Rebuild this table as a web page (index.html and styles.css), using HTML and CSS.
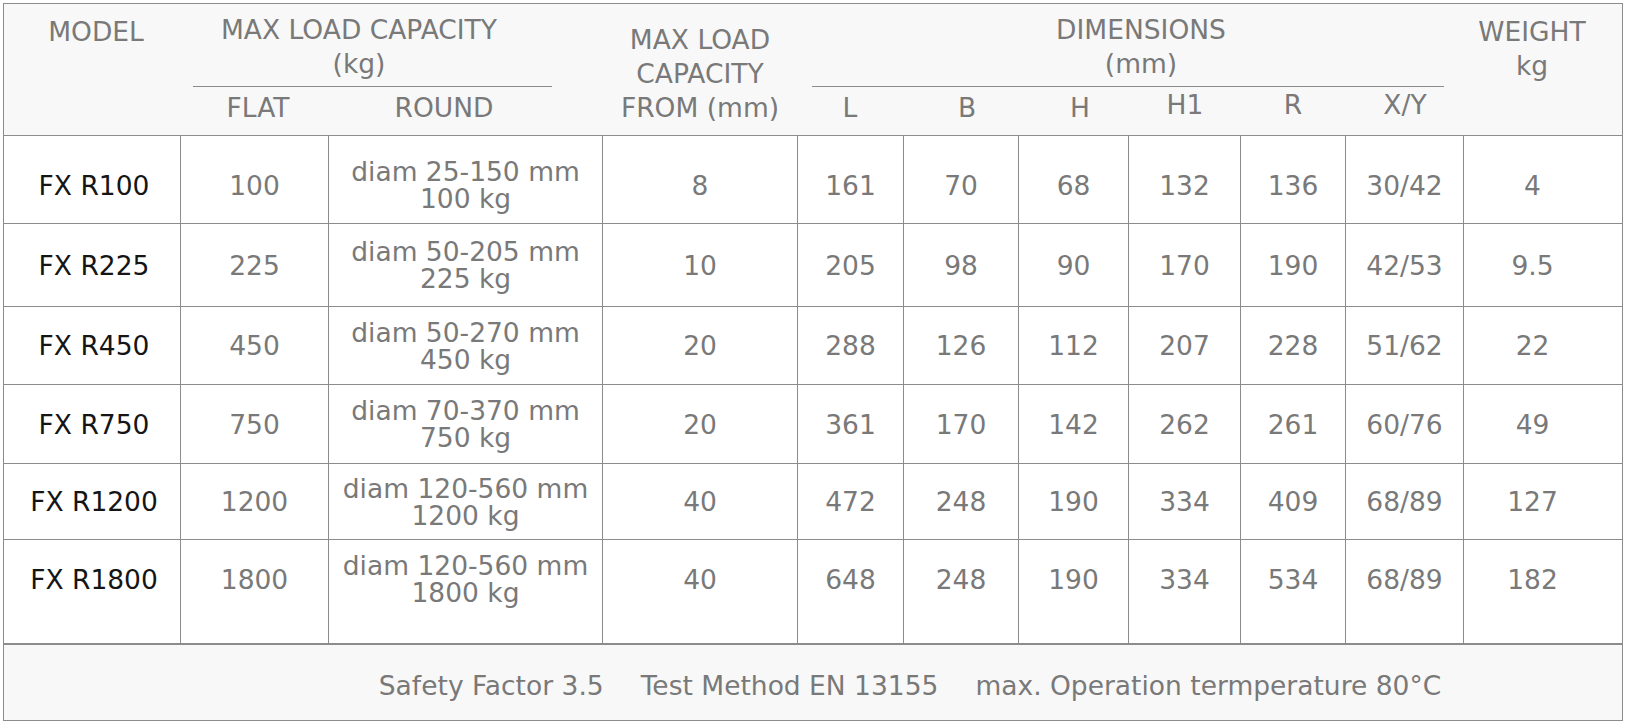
FILE: index.html
```html
<!DOCTYPE html>
<html lang="en">
<head>
<meta charset="utf-8">
<title>FX R specifications</title>
<link rel="stylesheet" href="styles.css">
</head>
<body>
<div class="spec">
  <div class="head">
    <div class="h-model">MODEL</div>
    <div class="h-group h-cap">
      <div class="h-title">MAX LOAD CAPACITY<br>(kg)</div>
      <div class="h-subs">
        <span class="s-flat">FLAT</span>
        <span class="s-round">ROUND</span>
      </div>
    </div>
    <div class="h-from">MAX LOAD<br>CAPACITY<br>FROM (mm)</div>
    <div class="h-group h-dim">
      <div class="h-title">DIMENSIONS<br>(mm)</div>
      <div class="h-subs">
        <span class="s-l">L</span>
        <span class="s-b">B</span>
        <span class="s-h">H</span>
        <span class="s-h1 up">H1</span>
        <span class="s-r up">R</span>
        <span class="s-xy up">X/Y</span>
      </div>
    </div>
    <div class="h-weight">WEIGHT<br>kg</div>
  </div>

  <div class="rows">
    <div class="row">
      <div class="c model">FX R100</div><div class="c">100</div><div class="c">diam 25-150 mm<br>100 kg</div><div class="c">8</div>
      <div class="c">161</div><div class="c">70</div><div class="c">68</div><div class="c">132</div><div class="c">136</div><div class="c">30/42</div><div class="c weight">4</div>
    </div>
    <div class="row">
      <div class="c model">FX R225</div><div class="c">225</div><div class="c">diam 50-205 mm<br>225 kg</div><div class="c">10</div>
      <div class="c">205</div><div class="c">98</div><div class="c">90</div><div class="c">170</div><div class="c">190</div><div class="c">42/53</div><div class="c weight">9.5</div>
    </div>
    <div class="row">
      <div class="c model">FX R450</div><div class="c">450</div><div class="c">diam 50-270 mm<br>450 kg</div><div class="c">20</div>
      <div class="c">288</div><div class="c">126</div><div class="c">112</div><div class="c">207</div><div class="c">228</div><div class="c">51/62</div><div class="c weight">22</div>
    </div>
    <div class="row">
      <div class="c model">FX R750</div><div class="c">750</div><div class="c">diam 70-370 mm<br>750 kg</div><div class="c">20</div>
      <div class="c">361</div><div class="c">170</div><div class="c">142</div><div class="c">262</div><div class="c">261</div><div class="c">60/76</div><div class="c weight">49</div>
    </div>
    <div class="row">
      <div class="c model">FX R1200</div><div class="c">1200</div><div class="c">diam 120-560 mm<br>1200 kg</div><div class="c">40</div>
      <div class="c">472</div><div class="c">248</div><div class="c">190</div><div class="c">334</div><div class="c">409</div><div class="c">68/89</div><div class="c weight">127</div>
    </div>
    <div class="row">
      <div class="c model">FX R1800</div><div class="c">1800</div><div class="c">diam 120-560 mm<br>1800 kg</div><div class="c">40</div>
      <div class="c">648</div><div class="c">248</div><div class="c">190</div><div class="c">334</div><div class="c">534</div><div class="c">68/89</div><div class="c weight">182</div>
    </div>
  </div>

  <div class="foot">
    <span>Safety Factor 3.5</span>
    <span>Test Method EN 13155</span>
    <span>max. Operation termperature 80°C</span>
  </div>
</div>
</body>
</html>
```

FILE: styles.css
```css
html, body {
  margin: 0;
  padding: 0;
  background: #ffffff;
}

body {
  padding: 3px 0 0 3px;
  font-family: "DejaVu Sans", Verdana, sans-serif;
  font-size: 26.5px;
  color: #797979;
}

.spec {
  width: 1620px;
  box-sizing: border-box;
  border: 1px solid #8c8c8c;
}

/* ---------- header ---------- */
.head {
  display: flex;
  height: 132px;
  box-sizing: border-box;
  background: #f8f8f8;
  border-bottom: 1px solid #8c8c8c;
  line-height: 34px;
  text-align: center;
}

.h-model {
  width: 184px;
  padding-top: 11px;
}

.h-group {
  display: flex;
  flex-direction: column;
  padding-top: 9px;
}

.h-title {
  border-bottom: 1px solid #8c8c8c;
  padding-bottom: 5px;
}

.h-subs {
  display: flex;
  margin-top: 4px;
}

.h-subs span {
  display: block;
  text-align: center;
}

.h-subs span.up {
  margin-top: -3px;
}

.h-cap {
  width: 372px;
}

.h-cap .h-title {
  margin: 0 8px 0 5px;
  padding-right: 27px;
}

.s-flat { width: 140px; }
.s-round { width: 232px; }

.h-from {
  width: 248px;
  box-sizing: border-box;
  padding-left: 32px;
  display: flex;
  flex-direction: column;
  justify-content: flex-end;
  padding-bottom: 10px;
}

.h-dim {
  width: 668px;
}

.h-dim .h-title {
  margin: 0 32px 0 4px;
  padding-left: 26px;
}

.s-l { width: 84px; }
.s-b { width: 150px; }
.s-h { width: 76px; }
.s-h1 { width: 134px; }
.s-r { width: 82px; }
.s-xy { width: 142px; }

.h-weight {
  flex: 1;
  padding-top: 11px;
  padding-right: 34px;
}

/* ---------- body rows ---------- */
.row {
  display: grid;
  grid-template-columns: 176px 148px 274px 195px 106px 115px 110px 112px 105px 118px 1fr;
  border-bottom: 1px solid #8c8c8c;
  box-sizing: border-box;
  line-height: 27px;
}

.row:nth-child(1) { height: 88px; padding-top: 11px; }
.row:nth-child(2) { height: 83px; }
.row:nth-child(3) { height: 78px; }
.row:nth-child(4) { height: 79px; }
.row:nth-child(5) { height: 76px; }
.row:nth-child(6) { height: 103px; border-bottom: none; padding-bottom: 25px; }

.row:nth-child(1) .c { margin-top: -11px; padding-top: 11px; }
.row:nth-child(6) .c { margin-bottom: -25px; padding-bottom: 25px; }

.c {
  display: flex;
  align-items: center;
  justify-content: center;
  text-align: center;
  box-sizing: border-box;
  border-left: 1px solid #8c8c8c;
}

.c.model {
  border-left: none;
  padding-left: 4px;
  color: #151515;
}

.c.weight {
  padding-right: 21px;
}

/* ---------- footer ---------- */
.foot {
  display: flex;
  justify-content: center;
  align-items: center;
  gap: 37px;
  height: 77px;
  box-sizing: border-box;
  padding: 7px 0 0 194px;
  background: #f8f8f8;
  border-top: 2px solid #8c8c8c;
  line-height: 30px;
}
```
